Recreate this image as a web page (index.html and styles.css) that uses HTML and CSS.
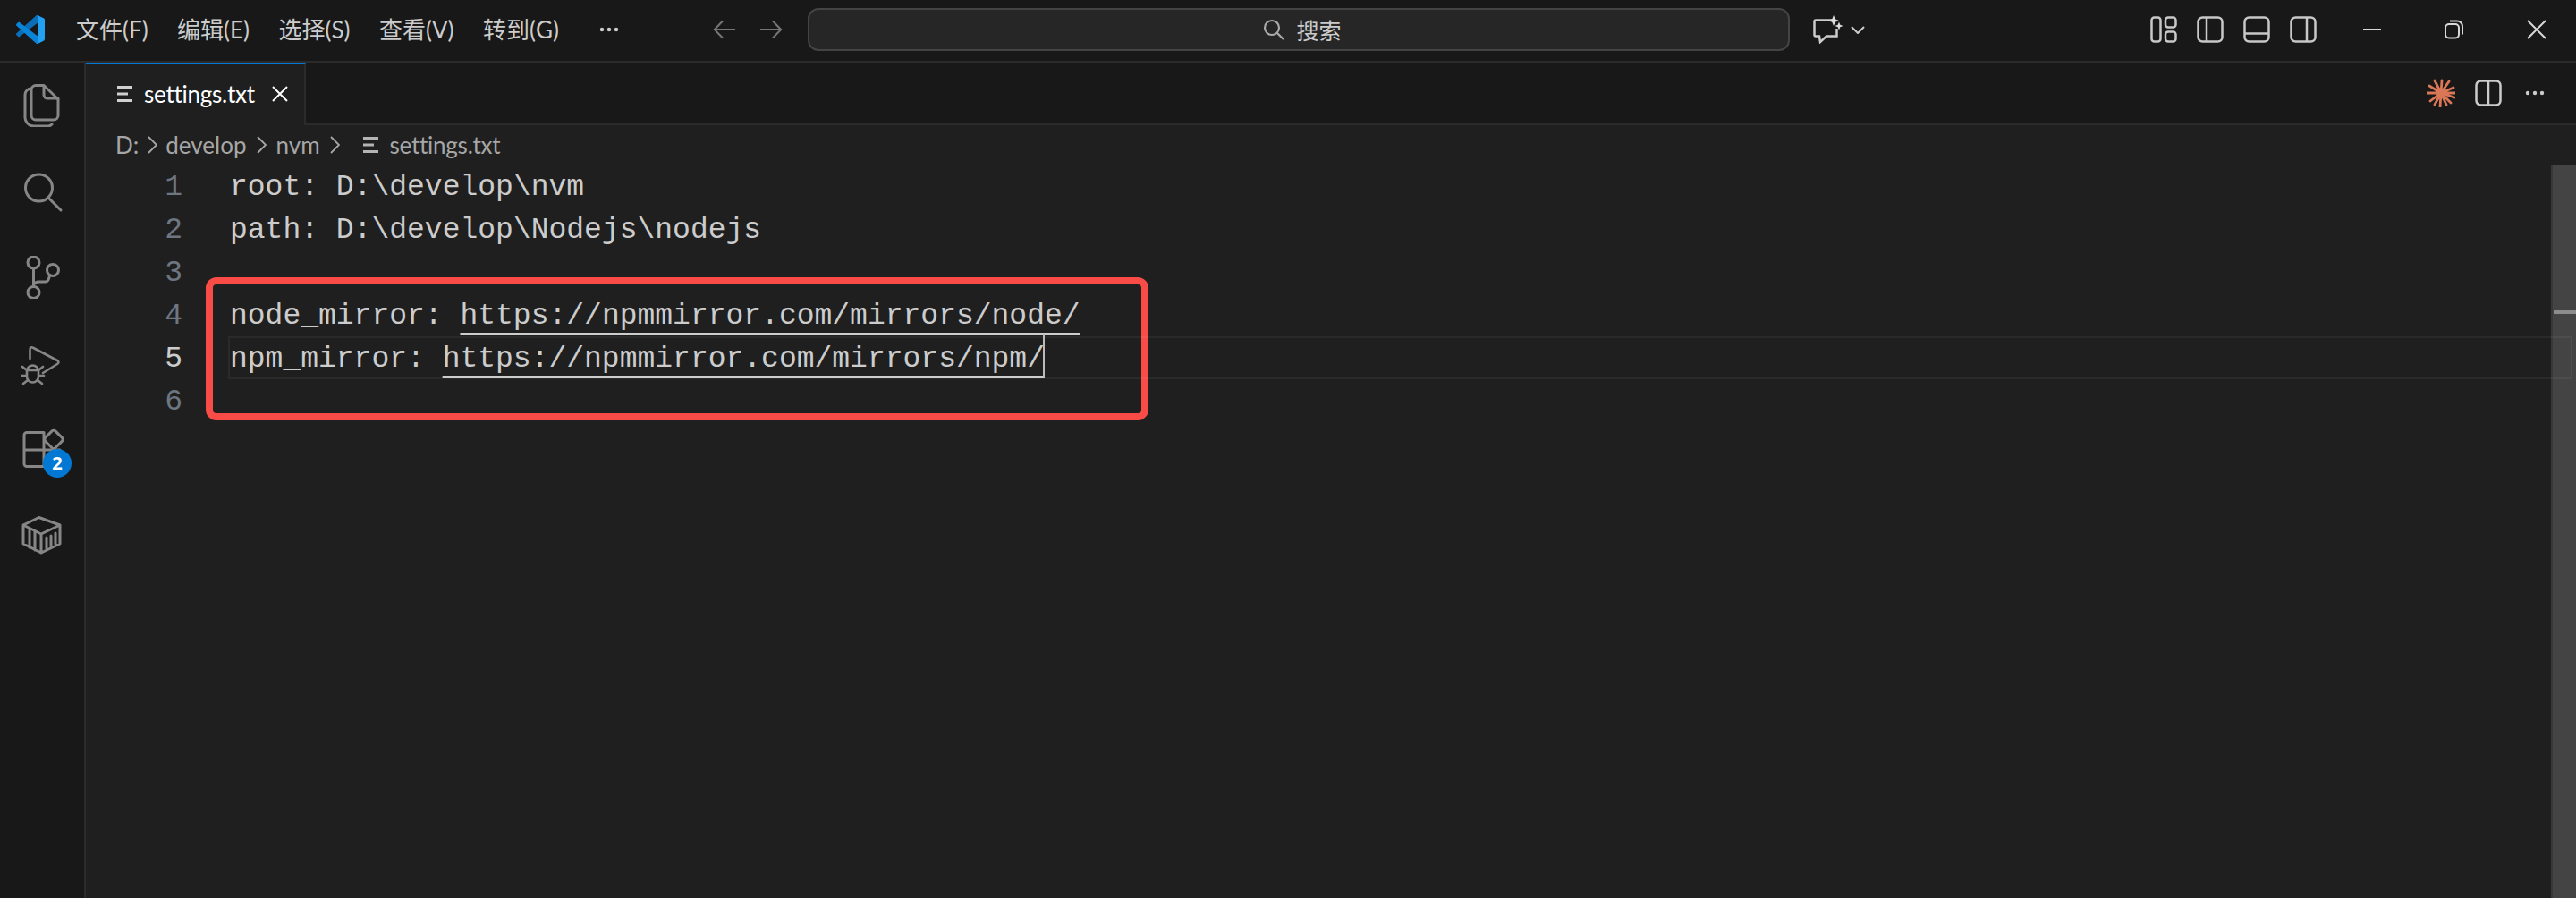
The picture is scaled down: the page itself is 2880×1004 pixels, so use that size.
FILE: index.html
```html
<!DOCTYPE html>
<html lang="zh-CN">
<head>
<meta charset="utf-8">
<title>settings.txt</title>
<link rel="stylesheet" href="styles.css">
</head>
<body>
<div class="window">
  <header class="titlebar">
    <svg class="logo" viewBox="0 0 100 100">
      <path fill="#0a6fb8" d="M96.5 10.8 75.9.9c-2.4-1.1-5.2-.7-7.1 1.2L1.4 63.6c-1.8 1.7-1.8 4.5 0 6.1l5.5 5c1.5 1.3 3.7 1.4 5.3.2L93.3 13.4c2.7-2 6.6-.1 6.6 3.3v-.2c0-2.4-1.4-4.6-3.4-5.7z"/>
      <path fill="#0a84d6" d="M96.5 89.2 75.9 99.1c-2.4 1.1-5.2.7-7.1-1.2L1.4 36.4c-1.8-1.7-1.8-4.5 0-6.1l5.5-5c1.5-1.3 3.7-1.4 5.3-.2l81.1 61.5c2.7 2 6.6.1 6.6-3.3v.2c0 2.4-1.4 4.6-3.4 5.7z"/>
      <path fill="#22a0f2" d="M75.9 99.1c-2.4 1.1-5.2.7-7.1-1.2 2.3 2.3 6.2.7 6.2-2.6V4.7c0-3.3-3.9-4.9-6.2-2.6 1.9-1.9 4.7-2.4 7.1-1.2l20.6 9.9c2.2 1 3.6 3.2 3.6 5.6v67.2c0 2.4-1.4 4.6-3.6 5.6z"/>
    </svg>
    <nav class="menu">
      <span class="menu-item">文件(F)</span>
      <span class="menu-item">编辑(E)</span>
      <span class="menu-item">选择(S)</span>
      <span class="menu-item">查看(V)</span>
      <span class="menu-item">转到(G)</span>
      <svg class="dots menu-dots" viewBox="0 0 22 6"><circle cx="3" cy="3" r="2.2"/><circle cx="11" cy="3" r="2.2"/><circle cx="19" cy="3" r="2.2"/></svg>
    </nav>
    <div class="nav-arrows">
      <svg class="nav-arrow" viewBox="0 0 26 22"><path d="M11 1.5 1.8 11l9.2 9.5M2 11h23"/></svg>
      <svg class="nav-arrow" viewBox="0 0 26 22"><path d="M15 1.5 24.2 11 15 20.5M24 11H1"/></svg>
    </div>
    <div class="search">
      <svg class="search-icon" viewBox="0 0 24 24"><circle cx="10" cy="10" r="8"/><path d="m16 16 7 7"/></svg>
      <span>搜索</span>
    </div>
    <svg class="chat" viewBox="0 0 34 32"><path class="chat-line" d="M24 5.5H3a1.5 1.5 0 0 0-1.5 1.5v15A1.5 1.5 0 0 0 3 23.500h4l1 6.500 7-6.500h11.500V15"/><path class="chat-spark" d="m23 0 1.700 4.300L29 6l-4.300 1.700L23 12l-1.700-4.300L17 6l4.300-1.700z"/><path class="chat-spark" d="m29 7.500 1.300 3.200 3.200 1.300-3.200 1.300L29 16.500l-1.300-3.200-3.200-1.300 3.200-1.300z"/></svg>
    <svg class="chat-chevron" viewBox="0 0 16 9"><path d="m1 1 7 7 7-7"/></svg>
    <div class="layout-icons">
      <svg class="layout-icon" viewBox="0 0 30 30"><rect x="1.500" y="1.500" width="10" height="27" rx="3"/><rect x="17" y="1.500" width="11.500" height="11" rx="3"/><rect x="17" y="17.500" width="11.500" height="11" rx="3"/></svg>
      <svg class="layout-icon" viewBox="0 0 30 30"><rect x="1.500" y="1.500" width="27" height="27" rx="5"/><path d="M11 2v26"/></svg>
      <svg class="layout-icon" viewBox="0 0 30 30"><rect x="1.500" y="1.500" width="27" height="27" rx="5"/><path d="M2 19.500h26"/></svg>
      <svg class="layout-icon" viewBox="0 0 30 30"><rect x="1.500" y="1.500" width="27" height="27" rx="5"/><path d="M19 2v26"/></svg>
    </div>
    <div class="window-controls">
      <svg class="win-icon" viewBox="0 0 22 22"><path d="M1 11h20"/></svg>
      <svg class="win-icon" viewBox="0 0 22 22"><rect x="1" y="5" width="15" height="15.500" rx="4"/><path d="M6 1.500h8a6 6 0 0 1 6 6v9"/></svg>
      <svg class="win-icon" viewBox="0 0 22 22"><path d="m1 1 20 20M21 1 1 21"/></svg>
    </div>
  </header>

  <div class="workbench">
    <aside class="activity">
      <div class="activity-item">
        <svg class="activity-icon" viewBox="0 0 48 48"><path d="M17 1.500h9L42 17v18a5 5 0 0 1-5 5H17a5 5 0 0 1-5-5V6.500a5 5 0 0 1 5-5z"/><path d="M26 2v10a4 4 0 0 0 4 4h12"/><path d="M12 5a7 7 0 0 0-7 7v24a10 10 0 0 0 10 11h16a7 7 0 0 0 4-2"/></svg>
      </div>
      <div class="activity-item">
        <svg class="activity-icon" viewBox="0 0 48 48"><circle cx="20.500" cy="20" r="15"/><path d="m31 31 14 14"/></svg>
      </div>
      <div class="activity-item">
        <svg class="activity-icon" viewBox="0 0 48 48"><circle cx="14.500" cy="7.500" r="6.500"/><circle cx="14.500" cy="41" r="6.500"/><circle cx="36" cy="16" r="6.500"/><path d="M14.500 14v20.500M14.500 33c1-3 3-4 6-4h7c3 0 4-2 5-7"/></svg>
      </div>
      <div class="activity-item">
        <svg class="activity-icon debug-icon" viewBox="0 0 48 48"><path d="M10.500 19V9q0-4 4-2L41 21q3 2 0 4L25 35"/><path d="M7 33a6.500 6.500 0 0 1 13 0v6a6.500 6.500 0 0 1-13 0zM7 32h13M7 32 2 28M20 32l5-4M7 38H1M20 38h6M8 43l-5 4M19 43l5 4"/></svg>
      </div>
      <div class="activity-item">
        <svg class="activity-icon" viewBox="0 0 48 48"><path d="M7 5.500h19v38H7a3 3 0 0 1-3-3v-32a3 3 0 0 1 3-3zM4 25h40M26 43.500h18V25"/><rect x="29.200" y="5.200" width="16" height="16" rx="3" transform="rotate(45 37 13)"/></svg>
        <span class="badge">2</span>
      </div>
      <div class="activity-item">
        <svg class="activity-icon" viewBox="0 0 48 48"><path d="M20.500 4.500 3 13v21l20 10 21-10V13zM3 13l20 10 21-10M23 23v21M10 17v21M16 20v21M29 27v12M34 25v12M39 22v12" /></svg>
      </div>
    </aside>

    <main class="main">
      <div class="tabs">
        <div class="tab">
          <svg class="doc-icon" viewBox="0 0 18 18"><path d="M0 1.500h17M0 9h12M0 16.500h17"/></svg>
          <span class="tab-name">settings.txt</span>
          <svg class="tab-close" viewBox="0 0 18 18"><path d="m1 1 16 16M17 1 1 17"/></svg>
        </div>
        <div class="tab-actions">
          <svg class="star" viewBox="0 0 32 32"><path d="M16 16 9 2M16 16 17 2M16 16l9-13M16 16 3 8M16 16l14-6M16 16H0M16 16h16M16 16 4 25M16 16l11 11M16 16 9 29M16 16l-1 16M16 16l6 13M16 16l15 5"/><circle cx="16" cy="16" r="4.500"/></svg>
          <svg class="split" viewBox="0 0 30 30"><rect x="1.500" y="1.500" width="27" height="27" rx="5"/><path d="M15 2v26"/></svg>
          <svg class="dots tab-dots" viewBox="0 0 22 6"><circle cx="3" cy="3" r="2.200"/><circle cx="11" cy="3" r="2.200"/><circle cx="19" cy="3" r="2.200"/></svg>
        </div>
      </div>
      <div class="breadcrumbs">
        <span>D:</span>
        <svg class="crumb-sep crumb-first" viewBox="0 0 11 20"><path d="m1 1 9 9-9 9"/></svg>
        <span>develop</span>
        <svg class="crumb-sep" viewBox="0 0 11 20"><path d="m1 1 9 9-9 9"/></svg>
        <span>nvm</span>
        <svg class="crumb-sep" viewBox="0 0 11 20"><path d="m1 1 9 9-9 9"/></svg>
        <svg class="doc-icon crumb-doc" viewBox="0 0 18 18"><path d="M0 1.500h17M0 9h12M0 16.500h17"/></svg>
        <span class="crumb-file">settings.txt</span>
      </div>
      <div class="editor">
        <div class="code">
          <div class="line"><span class="ln">1</span><span class="txt">root: D:\develop\nvm</span></div>
          <div class="line"><span class="ln">2</span><span class="txt">path: D:\develop\Nodejs\nodejs</span></div>
          <div class="line"><span class="ln">3</span><span class="txt"></span></div>
          <div class="line"><span class="ln">4</span><span class="txt">node_mirror: <span class="link">https://npmmirror.com/mirrors/node/</span></span></div>
          <div class="line current"><span class="ln">5</span><span class="txt">npm_mirror: <span class="link">https://npmmirror.com/mirrors/npm/</span><span class="cursor"></span></span></div>
          <div class="line"><span class="ln">6</span><span class="txt"></span></div>
          <div class="callout"></div>
        </div>
        <div class="scrollbar"><div class="scroll-mark"></div></div>
      </div>
    </main>
  </div>
</div>
</body>
</html>
```
FILE: styles.css
```css
* { box-sizing: border-box; }
html, body { margin: 0; height: 100%; background: #181818; overflow: hidden; }
body { font-family: "Noto Sans", "Noto Sans CJK SC", sans-serif; font-size: 26px; color: #ccc; }
svg { display: block; flex: none; fill: none; }

.window { display: flex; flex-direction: column; height: 1004px; }

.titlebar { display: flex; align-items: center; flex: none; height: 70px; padding-left: 18px; padding-bottom: 2px; background: #181818; border-bottom: 2px solid #2b2b2b; }
.logo { width: 32px; height: 32px; }
.menu { display: flex; align-items: center; gap: 32.500px; width: 700px; margin-left: 35px; white-space: nowrap; }
.menu-item { font-family: "Lato", "Noto Sans CJK SC", sans-serif; font-size: 26px; line-height: 36px; color: #ccc; }
.dots { fill: #ccc; width: 22px; height: 6px; }
.menu-dots { margin-left: 13px; }
.nav-arrows { display: flex; gap: 26px; margin-left: 12px; }
.nav-arrow { width: 26px; height: 22px; stroke: #767676; stroke-width: 2; }
.search { display: flex; align-items: center; justify-content: center; gap: 13px; width: 1098px; height: 48px; margin-left: 28px; padding-left: 8px; background: #262626; border: 2px solid #444; border-radius: 12px; color: #ccc; font-size: 25px; }
.search-icon { width: 24px; height: 24px; stroke: #aaa; stroke-width: 2.200; }
.chat { width: 34px; height: 32px; margin-left: 26px; }
.chat-line { stroke: #ccc; stroke-width: 2.500; }
.chat-spark { fill: #ddd; }
.chat-chevron { width: 16px; height: 9px; margin-left: 8px; stroke: #ccc; stroke-width: 2; }
.layout-icons { display: flex; gap: 22px; margin-left: 319px; }
.layout-icon { width: 30px; height: 30px; stroke: #c8c8c8; stroke-width: 2.500; }
.window-controls { display: flex; gap: 70px; margin-left: 51px; }
.win-icon { width: 22px; height: 22px; stroke: #d8d8d8; stroke-width: 2; }

.workbench { display: flex; flex: 1; min-height: 0; }
.activity { flex: none; width: 96px; background: #181818; border-right: 2px solid #2b2b2b; }
.activity-item { position: relative; display: flex; align-items: center; justify-content: center; height: 96px; }
.activity-icon { width: 48px; height: 48px; stroke: #868686; stroke-width: 3; stroke-linejoin: round; stroke-linecap: round; }
.debug-icon { stroke-width: 2.600; }
.badge { position: absolute; left: 48px; top: 48px; width: 32px; height: 32px; border-radius: 50%; background: #0078d4; color: #fff; font-size: 20px; font-weight: 700; line-height: 32px; text-align: center; }

.main { display: flex; flex-direction: column; flex: 1; min-width: 0; background: #1f1f1f; }
.tabs { display: flex; flex: none; height: 70px; background: #181818; border-bottom: 2px solid #2b2b2b; }
.tab { display: flex; align-items: center; flex: none; width: 246px; height: 70px; padding: 0 0 2px 35px; background: #1f1f1f; border-top: 2px solid #0078d4; border-right: 2px solid #2b2b2b; color: #fff; font-family: "Lato", sans-serif; }
.doc-icon { width: 18px; height: 18px; stroke: #d0d0d0; stroke-width: 3; }
.tab-name { margin-left: 12px; width: 143px; letter-spacing: -0.25px; }
.tab-close { width: 18px; height: 18px; stroke: #fff; stroke-width: 2; }
.tab-actions { display: flex; align-items: center; margin-left: auto; padding-right: 35px; }
.star { width: 32px; height: 32px; stroke: #d97757; stroke-width: 2.800; stroke-linecap: round; }
.star circle { fill: #d97757; stroke: none; }
.split { width: 30px; height: 30px; margin-left: 22px; stroke: #ccc; stroke-width: 2.500; }
.tab-dots { margin-left: 26px; }

.breadcrumbs { display: flex; align-items: center; flex: none; height: 44px; padding-left: 33px; color: #a6a6a6; font-family: "Lato", sans-serif; font-size: 26px; }
.crumb-sep { width: 11px; height: 20px; margin: 0 11px; stroke: #a6a6a6; stroke-width: 1.800; }
.crumb-first { margin: 0 9px 0 10px; }
.crumb-doc { margin: 0 12px 0 15px; stroke: #b4b4b4; }
.crumb-file { letter-spacing: -0.25px; }

.editor { display: flex; flex: 1; min-height: 0; }
.code { position: relative; flex: 1; min-width: 0; font-family: "Liberation Mono", monospace; font-size: 33px; }
.line { display: flex; height: 48px; line-height: 52px; white-space: pre; }
.ln { flex: none; width: 108px; margin-right: 53px; text-align: right; color: #6e7681; }
.txt { flex: 1; color: #ccc; }
.current { position: relative; z-index: 1; margin-right: -24px; }
.current .ln { color: #ccc; }
.current .txt { margin-left: -2px; border: 2px solid rgba(255,255,255,.05); line-height: 48px; }
.link { text-decoration: underline; text-decoration-color: #ccc; text-decoration-thickness: 3px; text-underline-offset: 10px; text-decoration-skip-ink: none; }
.cursor { position: relative; }
.cursor::after { content: ""; position: absolute; left: -2px; top: -10px; width: 2px; height: 48px; background: #bbb; }
.callout { position: absolute; left: 134px; top: 126px; width: 1054px; height: 160px; border: 8px solid #f94c47; border-radius: 12px; }
.scrollbar { position: relative; flex: none; width: 28px; background: #444; border-left: 2px solid #383838; }
.scroll-mark { position: absolute; left: 1px; right: 0; top: 163px; height: 4px; background: #8c8c8c; }
```
